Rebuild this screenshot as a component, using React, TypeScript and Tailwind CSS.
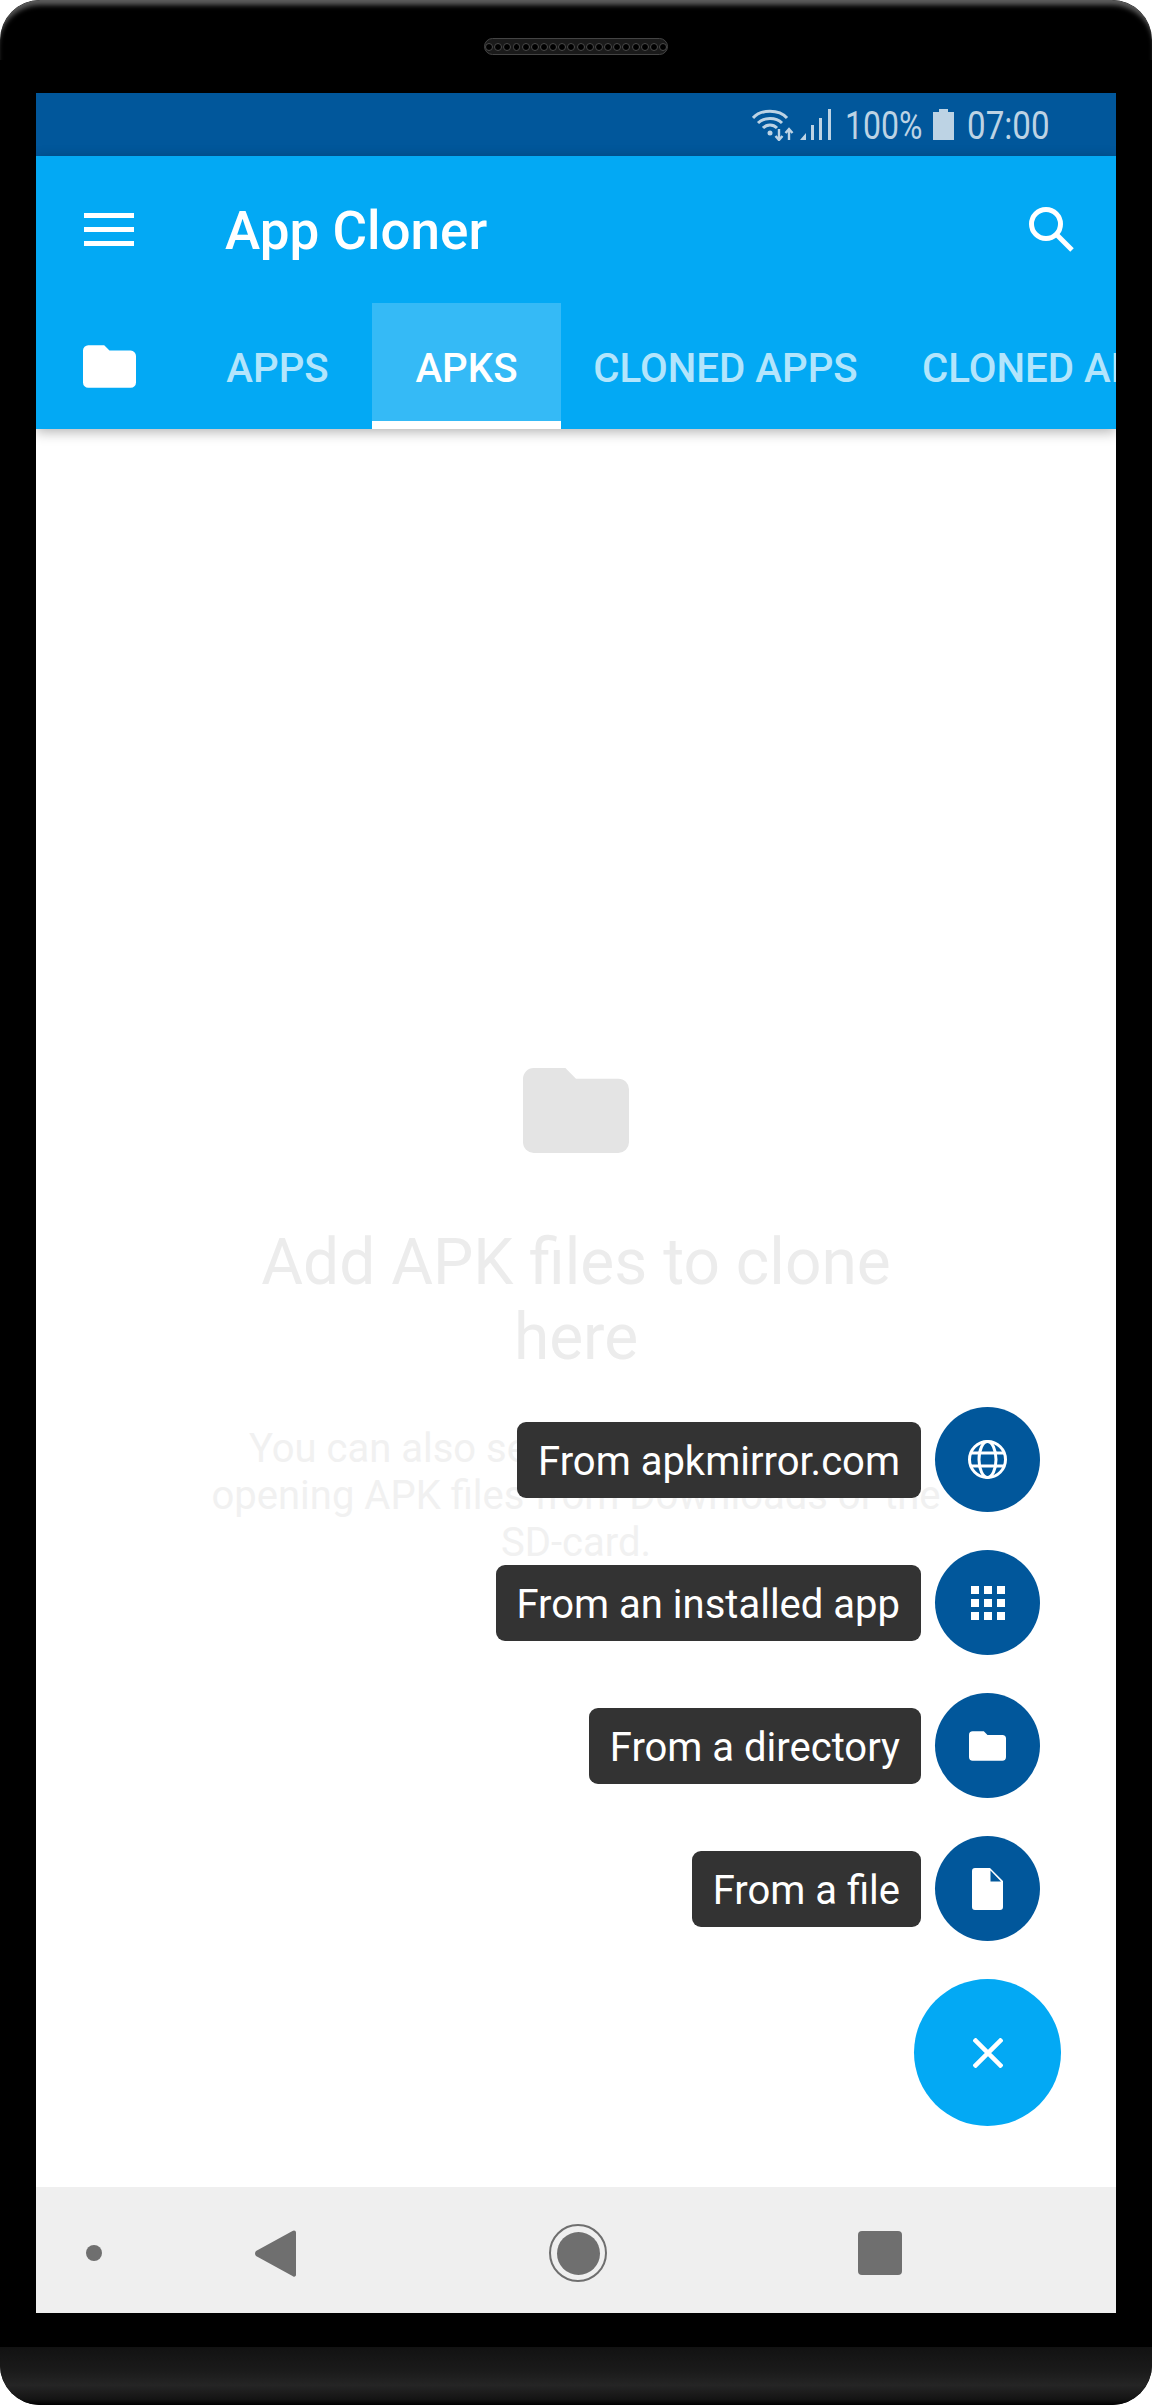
const fabItems = [
  { label: 'From apkmirror.com', icon: 'globe' },
  { label: 'From an installed app', icon: 'apps' },
  { label: 'From a directory', icon: 'folder' },
  { label: 'From a file', icon: 'file' },
]

function FolderIcon({ className }: { className: string }) {
  return (
    <svg className={className} viewBox="0 0 24 19.2" fill="currentColor">
      <path d="M2.4 0h7.2l2.4 2.4h9.600a2.4 2.4 0 0 1 2.4 2.4v12a2.4 2.4 0 0 1-2.4 2.4H2.4A2.4 2.4 0 0 1 0 16.800V2.4A2.4 2.4 0 0 1 2.4 0z" />
    </svg>
  )
}

function FabIcon({ name }: { name: string }) {
  if (name === 'globe') {
    return (
      <svg className="h-[39px] w-[39px] text-white" viewBox="0 0 39 39" fill="none" stroke="currentColor" strokeWidth="3">
        <circle cx="19.500" cy="19.500" r="18" />
        <ellipse cx="19.500" cy="19.500" rx="8.500" ry="18" />
        <path d="M3 13h33M3 26h33" />
      </svg>
    )
  }
  if (name === 'apps') {
    return (
      <div className="grid grid-cols-3 gap-[5px]">
        {Array.from({ length: 9 }).map((_, i) => (
          <div key={i} className="h-[8px] w-[8px] bg-white" />
        ))}
      </div>
    )
  }
  if (name === 'folder') return <FolderIcon className="h-[30px] w-[37px] text-white" />
  return (
    <svg className="h-[42px] w-[31px] text-white" viewBox="0 0 31 42" fill="currentColor">
      <path d="M3 0h15l13 13v26a3 3 0 0 1-3 3H3a3 3 0 0 1-3-3V3a3 3 0 0 1 3-3zM18.500 2.500V13.500H29z" fillRule="evenodd" />
    </svg>
  )
}

function StatusBar() {
  return (
    <div className="flex h-[63px] items-center justify-end bg-[#01579b] pr-[68px] text-[39px] leading-none text-[#bdd3e4]">
      <svg className="h-[32px] w-[42px]" viewBox="0 0 42 32" fill="none" stroke="currentColor" strokeWidth="3">
        <path d="M1 9C9 0 27 0 35 9" />
        <path d="M6 14C12 8 24 8 30 14" />
        <path d="M11 19C15 15 21 15 25 19" />
        <circle cx="18" cy="24" r="2.500" fill="currentColor" stroke="none" />
        <path d="M27 20v11M23.500 27l3.500 4 3.500-4M37 31V20M33.500 24l3.500-4 3.500 4" strokeWidth="2.400" />
      </svg>
      <svg className="ml-[6px] h-[31px] w-[31px]" viewBox="0 0 31 31" fill="currentColor">
        <path d="M0 31l6-7v7zM11 16h3v15h-3zM19 9h3v22h-3zM28 0h3v31h-3z" />
      </svg>
      <span className="ml-[14px] w-[78px] origin-left scale-x-[0.82] pt-[3px] whitespace-nowrap">100%</span>
      <svg className="ml-[10px] h-[31px] w-[21px]" viewBox="0 0 21 31" fill="currentColor">
        <path d="M6 0h9v3h6v28H0V3h6z" />
      </svg>
      <span className="ml-[13px] w-[81px] origin-left scale-x-[0.85] pt-[3px] whitespace-nowrap">07:00</span>
    </div>
  )
}

function AppBar() {
  return (
    <div className="z-10 flex h-[273px] flex-col bg-[#03a9f4] shadow-[0_3px_12px_rgba(0,0,0,0.3)]">
      <div className="flex h-[147px] shrink-0 items-center pr-[42px] pl-[48px]">
        <div className="flex h-[33px] w-[50px] flex-col justify-between">
          <div className="h-[5px] bg-white" />
          <div className="h-[5px] bg-white" />
          <div className="h-[5px] bg-white" />
        </div>
        <h1 className="ml-[91px] flex-1 pt-[5px] text-[53px] font-medium text-white">App Cloner</h1>
        <svg className="h-[45px] w-[45px] text-white" viewBox="0 0 45 45" fill="none" stroke="currentColor" strokeWidth="5">
          <circle cx="17" cy="17" r="14.500" />
          <path d="M27 27L43 43" />
        </svg>
      </div>
      <div className="flex flex-1 items-stretch overflow-hidden text-[40.250px] font-medium whitespace-nowrap">
        <div className="flex w-[147px] shrink-0 items-center pl-[47px]">
          <FolderIcon className="h-[43px] w-[53px] text-white" />
        </div>
        <div className="flex w-[189px] shrink-0 items-center justify-center pt-[6px] text-[#b3e5fc]">APPS</div>
        <div className="flex w-[189px] shrink-0 items-center justify-center border-b-[8px] border-white bg-[#35baf6] pt-[14px] text-white">APKS</div>
        <div className="flex w-[329px] shrink-0 items-center justify-center pt-[6px] text-[#b3e5fc]">CLONED APPS</div>
        <div className="flex shrink-0 items-center pt-[6px] pl-[32px] text-[#b3e5fc]">CLONED APPS</div>
      </div>
    </div>
  )
}

function EmptyState() {
  return (
    <div className="flex flex-1 flex-col items-center bg-white pt-[639px]">
      <FolderIcon className="h-[85px] w-[106px] text-[#e4e4e4]" />
      <h2 className="mt-[72px] w-[700px] text-center text-[64px] leading-[75px] font-normal text-[#ececec]">
        Add APK files to clone here
      </h2>
      <p className="mt-[50px] w-[800px] text-center text-[40px] leading-[47px] font-normal text-[#f1f1f1]">
        You can also select APKs to clone by
        <br />
        opening APK files from Downloads or the
        <br />
        SD-card.
      </p>
    </div>
  )
}

function FabMenu() {
  return (
    <div className="absolute top-[1407px] right-[91px] flex flex-col items-end">
      <div className="flex flex-col items-end gap-[38px]">
        {fabItems.map((item) => (
          <div key={item.label} className="flex items-center gap-[14px] pr-[21px]">
            <div className="flex h-[76px] items-center rounded-[9px] bg-[#333333] px-[21px] pt-[5px] text-[40px] text-white">
              {item.label}
            </div>
            <div className="flex h-[105px] w-[105px] items-center justify-center rounded-full bg-[#01579b]">
              <FabIcon name={item.icon} />
            </div>
          </div>
        ))}
      </div>
      <div className="mt-[38px] flex h-[147px] w-[147px] items-center justify-center rounded-full bg-[#03a9f4]">
        <svg className="h-[30px] w-[30px] text-white" viewBox="0 0 30 30" stroke="currentColor" strokeWidth="4.500">
          <path d="M1 1l28 28M29 1L1 29" />
        </svg>
      </div>
    </div>
  )
}

function NavBar() {
  return (
    <div className="flex h-[126px] items-center bg-[#efefef] pt-[6px] text-[#6f6f6f]">
      <div className="ml-[50px] h-[16px] w-[16px] rounded-full bg-[#6f6f6f]" />
      <svg className="ml-[153px] h-[47px] w-[41px]" viewBox="0 0 41 47" fill="currentColor">
        <path d="M39 0.500a2 2 0 0 1 2 2v42a2 2 0 0 1-3.500 1.500L1 26a4 4 0 0 1 0-5L37.500 1z" />
      </svg>
      <div className="ml-[253px] flex h-[58px] w-[58px] items-center justify-center rounded-full border-[2px] border-[#6f6f6f]">
        <div className="h-[43px] w-[43px] rounded-full bg-[#6f6f6f]" />
      </div>
      <div className="ml-[251px] h-[44px] w-[44px] rounded-[4px] bg-[#6f6f6f]" />
    </div>
  )
}

export default function App() {
  return (
    <div className="relative h-[2405px] w-[1152px] overflow-hidden bg-white font-['Roboto',sans-serif]">
      <div className="relative flex h-full flex-col overflow-hidden rounded-[40px] bg-black">
        <div className="absolute inset-x-0 top-0 h-[60px] rounded-t-[40px] shadow-[inset_0_7px_5px_-2px_#5c5c5c]" />
        <div className="flex h-[93px] shrink-0 items-start justify-center pt-[38px]">
          <div className="flex h-[17px] w-[184px] items-center justify-center gap-[1.2px] rounded-full border border-[#444444] bg-[#1a1a1a]">
            {Array.from({ length: 20 }).map((_, i) => (
              <div key={i} className="h-[8px] w-[8px] rounded-full border border-[#4a4a4a] bg-black" />
            ))}
          </div>
        </div>
        <div className="mx-[36px] flex h-[2220px] shrink-0 flex-col">
          <StatusBar />
          <AppBar />
          <EmptyState />
          <NavBar />
        </div>
        <div className="mt-[34px] flex-1 bg-[linear-gradient(to_bottom,#121212_0%,#1a1a1a_40%,#252525_66%,#141414_90%,#000000_100%)]" />
        <FabMenu />
      </div>
    </div>
  )
}
